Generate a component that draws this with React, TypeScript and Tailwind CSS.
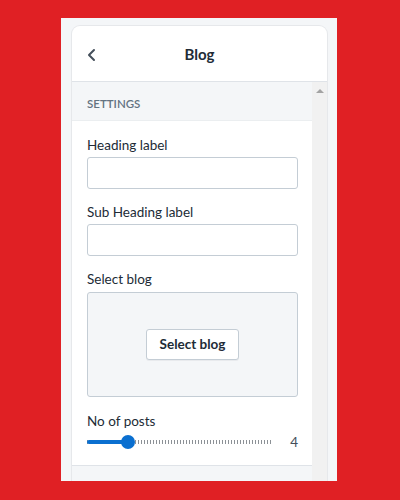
import React, { useState } from 'react';

const font = { fontFamily: 'Lato, "Open Sans", Arial, sans-serif' };

function Field({ label }: { label: string }) {
  return (
    <div className="flex flex-col">
      <label className="text-[13.5px] leading-[18px] text-[#212b36] mb-[3px]">{label}</label>
      <input className="h-[32px] w-full rounded-[3px] border border-[#c4cdd5] bg-white px-2 text-[13px] outline-none" />
    </div>
  );
}

export default function App() {
  const [posts] = useState(4);
  const pct = 22; // thumb position along the track

  return (
    <div className="w-[400px] h-[500px] bg-[#e02024] pt-[18px] pl-[61px]" style={font}>
      <div className="w-[276px] h-[463px] bg-[#f4f6f8] pt-[8px] pl-[11px] overflow-hidden">
        <div className="w-[255px] h-[455px] flex flex-col rounded-t-[8px] bg-white shadow-[0_0_0_1px_#e6e8eb] overflow-hidden">
          {/* header */}
          <div className="h-[56px] shrink-0 flex items-center px-[14px] pt-[2px] border-b border-[#dfe3e8] relative">
            <svg width="12" height="14" viewBox="0 0 12 14" className="text-[#454f5b]">
              <path d="M8 2 L3 7 L8 12" fill="none" stroke="currentColor" strokeWidth="2" strokeLinecap="round" strokeLinejoin="round" />
            </svg>
            <div className="absolute inset-0 pt-[2px] flex items-center justify-center text-[15px] font-bold text-[#212b36]">Blog</div>
          </div>

          <div className="flex flex-1 min-h-0">
            <div className="w-[240px] flex flex-col">
              <div className="h-[39px] shrink-0 bg-[#f4f6f8] flex items-center pt-[6px] pl-[15px] text-[11.5px] font-semibold text-[#637381] border-b border-[#ebeef0]">
                SETTINGS
              </div>
              <div className="bg-white pl-[15px] pr-[14px] pt-[15px] pb-[15px] flex flex-col gap-[14px] border-b border-[#dfe3e8]">
                <Field label="Heading label" />
                <Field label="Sub Heading label" />
                <div className="flex flex-col">
                  <label className="text-[13.5px] leading-[18px] text-[#212b36] mb-[4px]">Select blog</label>
                  <div className="h-[105px] rounded-[3px] border border-[#c4cdd5] bg-[#f4f6f8] flex items-center justify-center">
                    <button className="h-[31px] w-[93px] rounded-[3px] border border-[#c4cdd5] bg-white text-[13.5px] font-bold text-[#212b36] shadow-[0_1px_0_rgba(22,29,37,0.05)]">
                      Select blog
                    </button>
                  </div>
                </div>
                <div className="flex flex-col pt-[1px]">
                  <label className="text-[13.5px] leading-[18px] text-[#212b36] mb-[4px]">No of posts</label>
                  <div className="flex items-center h-[16px]">
                    <div className="relative w-[186px] h-[16px] flex items-center">
                      <div className="w-full h-[4px] bg-[repeating-linear-gradient(90deg,#8c9196_0_1px,transparent_1px_3px)]" />
                      <div className="absolute left-0 h-[4px] rounded-full bg-[#0a6fd0]" style={{ width: `${pct}%` }} />
                      <div className="absolute w-[14px] h-[14px] rounded-full bg-[#0a6fd0] -translate-x-1/2" style={{ left: `${pct}%` }} />
                    </div>
                    <div className="flex-1 text-right text-[13.5px] text-[#454f5b]">{posts}</div>
                  </div>
                </div>
              </div>
              <div className="flex-1 bg-[#f4f6f8]" />
            </div>
            {/* scrollbar */}
            <div className="w-[15px] bg-[#f1f1f1] flex justify-center pt-[7px]">
              <div className="w-0 h-0 border-l-[4px] border-r-[4px] border-b-[4px] border-l-transparent border-r-transparent border-b-[#a3a3a3]" />
            </div>
          </div>
        </div>
      </div>
    </div>
  );
}
